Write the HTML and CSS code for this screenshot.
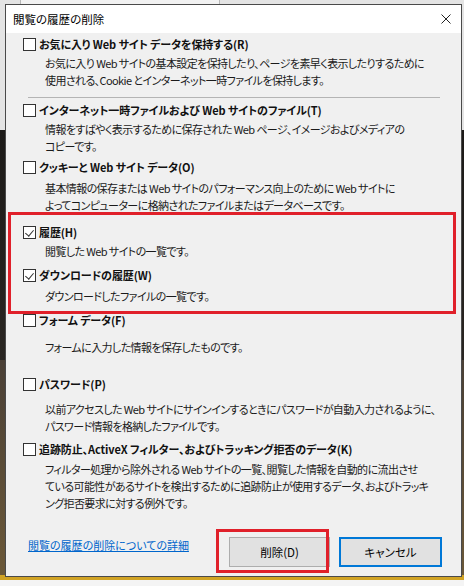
FILE: index.html
```html
<!DOCTYPE html>
<html lang="ja">
<head>
    <meta charset="UTF-8">
    <title>閲覧の履歴の削除</title>
    <link rel="stylesheet" href="styles.css">
</head>
<body>
    <div class="backdrop-tab"></div>

    <div class="dialog">
        <div class="titlebar">
            <span class="title">閲覧の履歴の削除</span>
            <svg class="close" width="10" height="10" viewBox="0 0 10 10">
                <path d="M0.5 0.5 L9.5 9.5 M9.5 0.5 L0.5 9.5" stroke="#222" stroke-width="1" fill="none"/>
            </svg>
        </div>

        <div class="content">
            <div class="option first">
                <label class="opt-label"><span class="box"></span>お気に入り Web サイト データを保持する(R)</label>
                <p class="opt-desc">お気に入り Web サイトの基本設定を保持したり、ページを素早く表示したりするために<br>使用される、Cookie とインターネット一時ファイルを保持します。</p>
            </div>

            <hr class="sep">

            <div class="option after-sep">
                <label class="opt-label"><span class="box"></span>インターネット一時ファイルおよび Web サイトのファイル(T)</label>
                <p class="opt-desc">情報をすばやく表示するために保存された Web ページ、イメージおよびメディアの<br>コピーです。</p>
            </div>

            <div class="option tight">
                <label class="opt-label"><span class="box"></span>クッキーと Web サイト データ(O)</label>
                <p class="opt-desc spaced">基本情報の保存または Web サイトのパフォーマンス向上のために Web サイトに<br>よってコンピューターに格納されたファイルまたはデータベースです。</p>
            </div>

            <div class="option wide">
                <label class="opt-label"><span class="box checked"></span>履歴(H)</label>
                <p class="opt-desc">閲覧した Web サイトの一覧です。</p>
            </div>

            <div class="option">
                <label class="opt-label"><span class="box checked"></span>ダウンロードの履歴(W)</label>
                <p class="opt-desc spaced">ダウンロードしたファイルの一覧です。</p>
            </div>

            <div class="option">
                <label class="opt-label"><span class="box"></span>フォーム データ(F)</label>
                <p class="opt-desc loose">フォームに入力した情報を保存したものです。</p>
            </div>

            <div class="option far">
                <label class="opt-label"><span class="box"></span>パスワード(P)</label>
                <p class="opt-desc roomy">以前アクセスした Web サイトにサインインするときにパスワードが自動入力されるように、<br>パスワード情報を格納したファイルです。</p>
            </div>

            <div class="option near">
                <label class="opt-label"><span class="box"></span>追跡防止、ActiveX フィルター、およびトラッキング拒否のデータ(K)</label>
                <p class="opt-desc near">フィルター処理から除外される Web サイトの一覧、閲覧した情報を自動的に流出させ<br>ている可能性があるサイトを検出するために追跡防止が使用するデータ、およびトラッキ<br>ング拒否要求に対する例外です。</p>
            </div>
        </div>

        <div class="footer">
            <a class="more" href="#">閲覧の履歴の削除についての詳細</a>
            <div class="buttons">
                <button class="btn">削除(D)</button>
                <button class="btn default">キャンセル</button>
            </div>
        </div>

        <div class="mark mark-history"></div>
        <div class="mark mark-delete"></div>
    </div>
</body>
</html>
```

FILE: styles.css
```css
* {
    margin: 0;
    padding: 0;
    box-sizing: border-box;
    font-family: "Noto Sans CJK JP", "Noto Sans", sans-serif;
    font-feature-settings: "palt";
}

body {
    width: 464px;
    height: 586px;
    overflow: hidden;
    padding: 4px 0 0 5px;
    background: linear-gradient(to bottom,
        #e4e4e4 0, #e4e4e4 130px,
        #1c1a18 130px, #2a2622 360px,
        #4a4036 360px, #6b5838 575px,
        #d1a324 575px, #d1a324 580px,
        #f4f4f4 580px);
    color: #000;
    font-size: 11px;
}

.backdrop-tab {
    position: absolute;
    top: 0;
    left: 20px;
    width: 200px;
    height: 4px;
    background: #f2f2f2;
    border-left: 1px solid #b8b8b8;
    border-right: 1px solid #b8b8b8;
}

.dialog {
    position: relative;
    width: 457px;
    height: 573px;
    background: #f0f0f0;
    border: 1px solid #4a4a4a;
    display: flex;
    flex-direction: column;
}

.titlebar {
    height: 28px;
    background: #fff;
    display: flex;
    align-items: center;
    justify-content: space-between;
    padding: 0 10px 0 7px;
    flex-shrink: 0;
}

.title {
    font-size: 11.5px;
    color: #000;
}

.content {
    padding: 3px 17px 0 17px;
    white-space: nowrap;
}

.opt-label {
    display: flex;
    align-items: center;
    gap: 3px;
    line-height: 17px;
    font-weight: bold;
    letter-spacing: -0.1px;
    color: #111;
}

.box {
    width: 13px;
    height: 13px;
    border: 1px solid #333;
    background: #fff;
    flex-shrink: 0;
    position: relative;
}

.box.checked::after {
    content: "";
    position: absolute;
    left: 3px;
    top: 1px;
    width: 4px;
    height: 7px;
    border-right: 1px solid #333;
    border-bottom: 1px solid #333;
    transform: rotate(40deg);
}

.opt-desc {
    padding-left: 22px;
    line-height: 17px;
    margin-top: 2px;
    letter-spacing: -0.6px;
    color: #1a1a1a;
}

.opt-desc.near {
    margin-top: 3px;
}

.opt-desc.spaced {
    margin-top: 4px;
}

.opt-desc.roomy {
    margin-top: 8px;
}

.opt-desc.loose {
    margin-top: 10px;
}

.option {
    margin-top: 7px;
}

.option.first {
    margin-top: 0;
}

.option.after-sep,
.option.tight {
    margin-top: 4px;
}

.option.near {
    margin-top: 6px;
}

.option.wide {
    margin-top: 10px;
}

.option.far {
    margin-top: 20px;
}

.sep {
    border: none;
    border-top: 1px solid #b4b4b4;
    margin: 8px 4px 0 5px;
}

.footer {
    margin-top: auto;
    display: flex;
    justify-content: space-between;
    align-items: flex-start;
    padding: 0 19px 9px 22px;
}

.more {
    color: #0066cc;
    text-decoration: underline;
}

.buttons {
    display: flex;
    gap: 9px;
}

.btn {
    width: 101px;
    height: 30px;
    background: #e1e1e1;
    border: 1px solid #adadad;
    font-size: 11.5px;
    color: #000;
}

.btn.default {
    width: 103px;
    border: 2px solid #0078d7;
}

.mark {
    position: absolute;
    border: 3px solid #e0202a;
}

.mark-history {
    left: 2px;
    top: 207px;
    width: 448px;
    height: 102px;
}

.mark-delete {
    left: 210px;
    top: 524px;
    width: 113px;
    height: 44px;
}
```
